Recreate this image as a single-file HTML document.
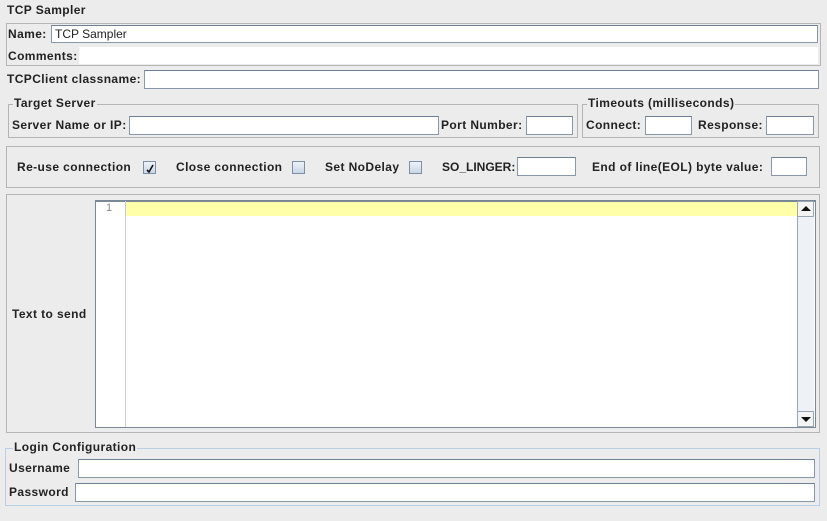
<!DOCTYPE html>
<html><head><meta charset="utf-8"><style>
*{box-sizing:border-box;margin:0;padding:0}
body{width:827px;height:521px;background:#ececec;font-family:"Liberation Sans",sans-serif;font-size:12px;color:#222;position:relative;overflow:hidden}
.a{position:absolute}
.l{position:absolute;font-weight:bold;white-space:nowrap;line-height:14px;font-size:12px;letter-spacing:0.4px}
.in{position:absolute;background:#fff;border:1px solid #8a97a8;border-top-color:#6f7f92}
.box{position:absolute;border:1px solid #b4b4b4}
.fs{position:absolute;border:1px solid #b4b4b4}
.lg{position:absolute;background:#ececec;font-weight:bold;padding:0 1px;line-height:14px;font-size:12px;letter-spacing:0.4px}
.cb{position:absolute;width:13px;height:13px;border:1px solid #7f8fa3;background:linear-gradient(#eef3f9,#c9d6e6)}
</style></head><body>
<div class="l" style="left:7px;top:3px">TCP Sampler</div>
<div class="box" style="left:6px;top:23px;width:815px;height:43px"></div>
<div class="l" style="left:8px;top:27px">Name:</div>
<div class="in" style="left:51px;top:25px;width:767px;height:18px"></div>
<div class="a" style="left:55px;top:27px;font-size:12px;line-height:14px">TCP Sampler</div>
<div class="l" style="left:8px;top:49px">Comments:</div>
<div class="a" style="left:79px;top:47px;width:739px;height:17px;background:#fff"></div>
<div class="l" style="left:7px;top:72px">TCPClient classname:</div>
<div class="in" style="left:144px;top:70px;width:675px;height:19px"></div>

<div class="fs" style="left:8px;top:104px;width:570px;height:34px"></div>
<div class="lg" style="left:13px;top:96px">Target Server</div>
<div class="l" style="left:12px;top:118px">Server Name or IP:</div>
<div class="in" style="left:129px;top:116px;width:310px;height:19px"></div>
<div class="l" style="left:441px;top:118px">Port Number:</div>
<div class="in" style="left:526px;top:116px;width:47px;height:19px"></div>

<div class="fs" style="left:582px;top:104px;width:237px;height:34px"></div>
<div class="lg" style="left:587px;top:96px">Timeouts (milliseconds)</div>
<div class="l" style="left:586px;top:118px">Connect:</div>
<div class="in" style="left:645px;top:116px;width:47px;height:19px"></div>
<div class="l" style="left:698px;top:118px">Response:</div>
<div class="in" style="left:766px;top:116px;width:48px;height:19px"></div>

<div class="box" style="left:6px;top:146px;width:814px;height:42px"></div>
<div class="l" style="left:17px;top:160px">Re-use connection</div>
<div class="cb" style="left:143px;top:161px"></div>
<svg class="a" style="left:143px;top:161px" width="13" height="13"><path d="M4 9 L6 11 L10 4" stroke="#111" stroke-width="1.6" fill="none"/></svg>
<div class="l" style="left:176px;top:160px">Close connection</div>
<div class="cb" style="left:292px;top:161px"></div>
<div class="l" style="left:325px;top:160px">Set NoDelay</div>
<div class="cb" style="left:409px;top:161px"></div>
<div class="l" style="left:442px;top:160px;letter-spacing:0">SO_LINGER:</div>
<div class="in" style="left:517px;top:157px;width:59px;height:19px"></div>
<div class="l" style="left:592px;top:160px">End of line(EOL) byte value:</div>
<div class="in" style="left:771px;top:157px;width:36px;height:19px"></div>

<div class="box" style="left:6px;top:194px;width:814px;height:239px"></div>
<div class="l" style="left:12px;top:307px">Text to send</div>
<div class="a" style="left:95px;top:200px;width:721px;height:228px;background:#fff;border:1px solid #7a8797;border-top:2px solid #7a8797"></div>
<div class="a" style="left:125px;top:201px;width:1px;height:226px;background:#ccc"></div>
<div class="a" style="left:106px;top:202px;font-size:11px;color:#888">1</div>
<div class="a" style="left:126px;top:202px;width:671px;height:14px;background:#ffffaa"></div>
<div class="a" style="left:797px;top:201px;width:17px;height:226px;background:#eef1f5;border-left:1px solid #9aa6b5"></div>
<div class="a" style="left:797px;top:201px;width:17px;height:16px;border:1px solid #9aa6b5;background:#f4f4f4"></div>
<svg class="a" style="left:800px;top:205px" width="12" height="8"><path d="M1 6 L6 1 L11 6Z" fill="#111"/></svg>
<div class="a" style="left:797px;top:411px;width:17px;height:16px;border:1px solid #9aa6b5;background:#f4f4f4"></div>
<svg class="a" style="left:800px;top:415px" width="12" height="8"><path d="M1 2 L6 7 L11 2Z" fill="#111"/></svg>

<div class="fs" style="left:5px;top:448px;width:815px;height:58px;border-color:#b8cfe5"></div>
<div class="lg" style="left:13px;top:440px">Login Configuration</div>
<div class="l" style="left:9px;top:461px">Username</div>
<div class="in" style="left:78px;top:459px;width:737px;height:19px"></div>
<div class="l" style="left:9px;top:485px">Password</div>
<div class="in" style="left:75px;top:483px;width:740px;height:19px"></div>
</body></html>
